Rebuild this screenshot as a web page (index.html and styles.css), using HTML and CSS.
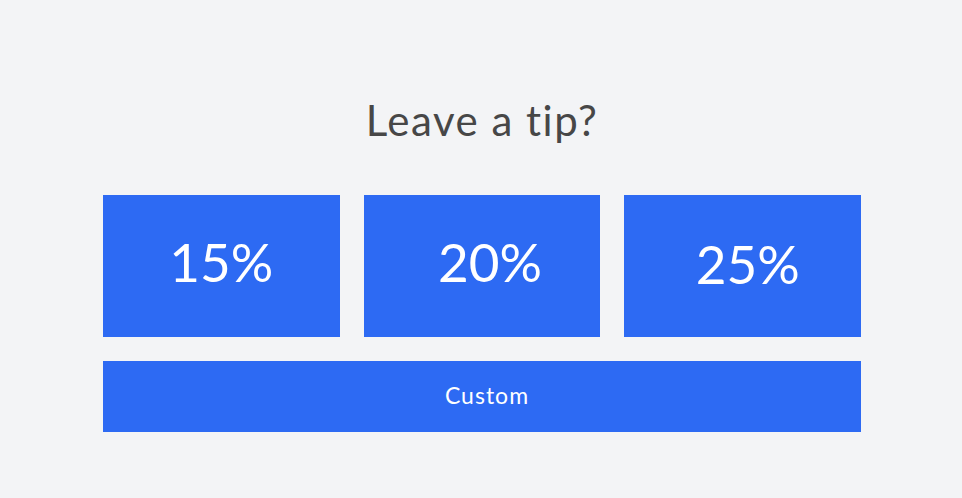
FILE: index.html
```html
<!DOCTYPE html>
<html lang="en">
<head>
    <meta charset="UTF-8">
    <meta name="viewport" content="width=device-width, initial-scale=1.0">
    <title>Leave a tip</title>
    <link rel="stylesheet" href="styles.css">
</head>
<body>
    <div class="tip">
        <h1>Leave a tip?</h1>
        <div class="tip-options">
            <button class="tip-option tip-15">15%</button>
            <button class="tip-option tip-20">20%</button>
            <button class="tip-option tip-25">25%</button>
        </div>
        <button class="tip-custom">Custom</button>
    </div>
</body>
</html>
```

FILE: styles.css
```css
:root {
    --bg-color: #f3f4f6;
    --text-color: #474747;
    --accent-color: #2d6af3;
}

html, body {
    margin: 0;
    padding: 0;
    min-height: 100vh;
    background-color: var(--bg-color);
}

body {
    font-family: Lato, "Open Sans", sans-serif;
    color: var(--text-color);
    padding-left: 2px;
}

.tip {
    width: 758px;
    margin: 0 auto;
    padding-top: 95px;
}

h1 {
    margin: 0 0 50px;
    font-size: 42px;
    line-height: 50px;
    font-weight: normal;
    letter-spacing: 1.5px;
    text-align: center;
}

.tip-options {
    display: grid;
    grid-template-columns: repeat(3, 1fr);
    gap: 24px;
    margin-bottom: 24px;
}

button {
    font-family: inherit;
    border: none;
    border-radius: 0;
    background-color: var(--accent-color);
    color: white;
    cursor: pointer;
    padding: 0;
}

.tip-option {
    height: 142px;
    font-size: 53px;
    padding-bottom: 9px;
}

.tip-20 {
    padding-left: 16px;
}

.tip-25 {
    padding-left: 10px;
    padding-bottom: 5px;
}

.tip-custom {
    display: block;
    width: 100%;
    height: 71px;
    font-size: 23px;
    letter-spacing: 1px;
    padding-left: 10px;
    padding-bottom: 3px;
}
```
